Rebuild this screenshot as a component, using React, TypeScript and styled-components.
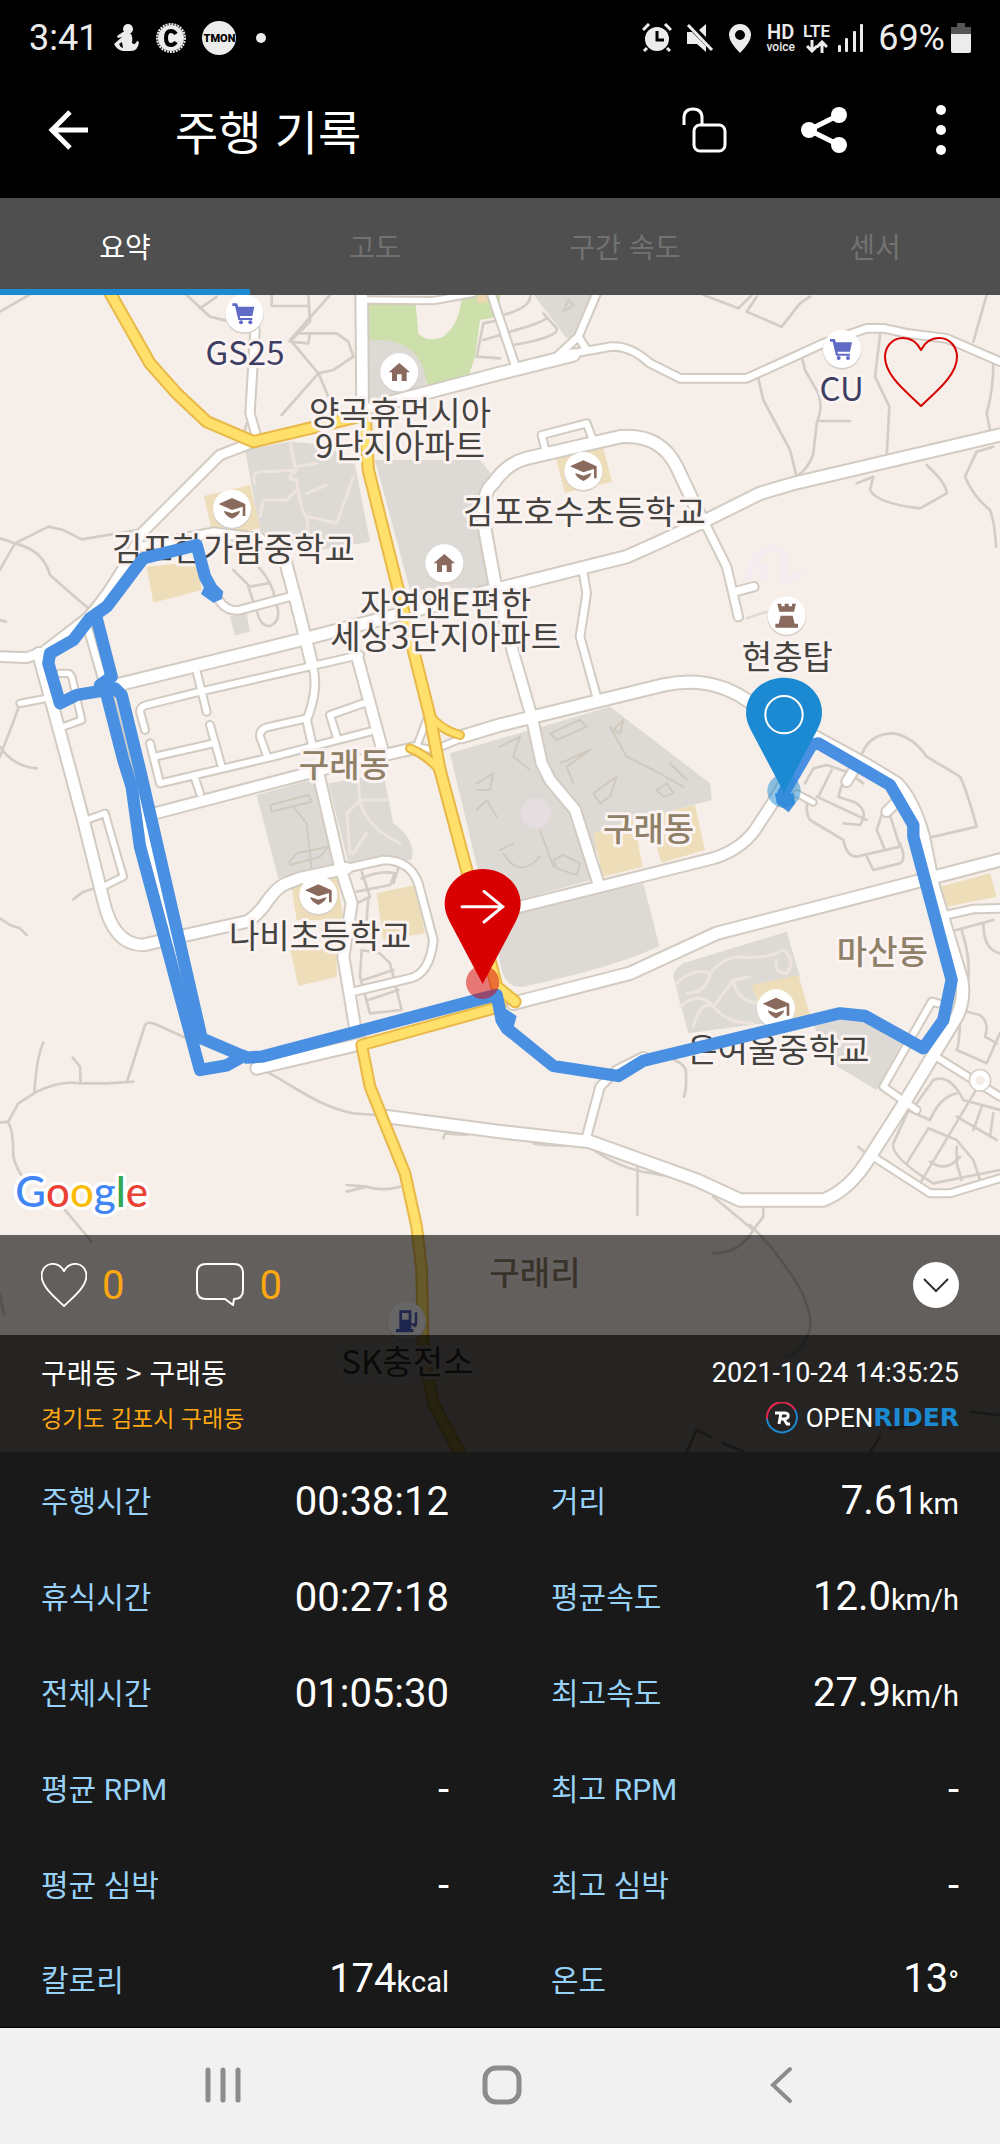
import React from "react";
import styled, { createGlobalStyle } from "styled-components";

const sans = `Roboto, "Noto Sans CJK KR", sans-serif`;
const korean = `"Noto Sans CJK KR", "Noto Sans", sans-serif`;

const GlobalStyle = createGlobalStyle`
  *, *::before, *::after { box-sizing: border-box; }
  body { margin: 0; background: #191919; }
  button { border: 0; padding: 0; background: none; color: inherit; font: inherit; cursor: pointer; }
  svg { display: block; flex: none; }
`;

const Page = styled.div`
  min-height: 100vh;
  display: flex;
  flex-direction: column;
  background: #191919;
  color: #fff;
  font-family: ${sans};
`;

/* ---------- status bar ---------- */

const StatusBar = styled.div`
  height: 76px;
  padding: 0 29px;
  display: flex;
  align-items: center;
  justify-content: space-between;
  background: #000;
  color: #ececec;
`;

const StatusGroup = styled.div<{ $gap: number }>`
  display: flex;
  align-items: center;
  gap: ${(p) => p.$gap}px;
`;

const StatusText = styled.span`
  font-size: 36px;
  line-height: 40px;
`;

const Stacked = styled.span`
  display: flex;
  flex-direction: column;
  align-items: center;
`;

const StackedTop = styled.strong<{ $size: number }>`
  font-size: ${(p) => p.$size}px;
  line-height: 17px;
  font-weight: 600;
`;

const StackedBottom = styled.span`
  font-size: 12px;
  line-height: 12px;
  font-weight: 500;
`;

/* ---------- app bar ---------- */

const AppBar = styled.header`
  height: 122px;
  padding: 0 38px 14px 48px;
  display: flex;
  align-items: center;
  background: #000;
`;

const Title = styled.h1`
  flex: 1;
  margin: 0 0 0 86px;
  font-family: ${korean};
  font-size: 47px;
  line-height: 56px;
  font-weight: 400;
`;

const Actions = styled.div`
  display: flex;
  align-items: center;
  gap: 73px;
`;

const IconButton = styled.button`
  display: flex;
  align-items: center;
  justify-content: center;
`;

/* ---------- tabs ---------- */

const Tabs = styled.nav`
  display: grid;
  grid-template-columns: repeat(4, 1fr);
  background: #4f4f4f;
`;

const Tab = styled.button<{ $active: boolean }>`
  height: 97px;
  padding-top: 5px;
  font-family: ${korean};
  font-size: 28px;
  line-height: 36px;
  font-weight: 400;
  color: ${(p) => (p.$active ? "#fff" : "#727272")};
  border-bottom: 6px solid ${(p) => (p.$active ? "#1b8ad2" : "#4f4f4f")};
`;

/* ---------- map ---------- */

const MapArea = styled.section`
  position: relative;
  display: grid;
  background: #f6eee8;
`;

const MapDrawing = styled.svg`
  grid-area: 1 / 1;
  width: 100%;
  height: auto;
`;

const Favorite = styled.button`
  position: absolute;
  top: 42px;
  right: 42px;
`;

const Overlay = styled.div`
  grid-area: 1 / 1;
  align-self: end;
  position: relative;
`;

const Reactions = styled.div`
  height: 100px;
  padding: 0 41px;
  display: flex;
  align-items: center;
  justify-content: space-between;
  background: rgba(0, 0, 0, 0.6);
`;

const ReactionList = styled.div`
  display: flex;
  gap: 72px;
`;

const Reaction = styled.button`
  display: flex;
  align-items: center;
  gap: 15px;
`;

const Count = styled.span`
  padding-top: 2px;
  font-size: 40px;
  line-height: 44px;
  color: #ffa812;
`;

const Summary = styled.div`
  height: 117px;
  padding: 18px 41px 16px;
  display: flex;
  justify-content: space-between;
  background: rgba(0, 0, 0, 0.85);
`;

const SummaryColumn = styled.div<{ $end?: boolean }>`
  display: flex;
  flex-direction: column;
  justify-content: space-between;
  align-items: ${(p) => (p.$end ? "flex-end" : "flex-start")};
`;

const RouteName = styled.h2`
  margin: 0;
  font-family: ${korean};
  font-size: 28px;
  line-height: 38px;
  font-weight: 400;
`;

const Region = styled.span`
  font-family: ${korean};
  font-size: 23px;
  line-height: 38px;
  color: #ffa812;
`;

const Timestamp = styled.time`
  font-size: 27px;
  line-height: 40px;
`;

const Brand = styled.span`
  display: flex;
  align-items: center;
  font-size: 26px;
  line-height: 36px;
`;

const BrandOpen = styled.span`
  margin-left: 7px;
`;

const BrandRider = styled.strong`
  font-family: "DejaVu Sans", sans-serif;
  font-size: 25px;
  font-weight: 700;
  color: #1b8ad2;
`;

/* ---------- statistics ---------- */

const Stats = styled.dl`
  margin: 0;
  padding: 2px 41px 0;
  display: grid;
  grid-template-columns: 1fr 1fr;
  grid-template-rows: repeat(5, 96px) 93px;
  column-gap: 102px;
  background: #191919;
`;

const Stat = styled.div`
  display: flex;
  align-items: center;
  justify-content: space-between;
`;

const StatLabel = styled.dt`
  font-family: ${sans};
  font-size: 30px;
  line-height: 40px;
  color: #98d2f8;
`;

const StatValue = styled.dd`
  margin: 0;
  font-size: 40px;
  line-height: 48px;
`;

const Unit = styled.span`
  font-size: 29px;
`;

/* ---------- system navigation ---------- */

const SystemNav = styled.nav`
  height: 117px;
  padding: 0 0 2px 4px;
  display: grid;
  grid-template-columns: repeat(3, 28%);
  justify-content: center;
  background: #f1f1f1;
  border-top: 1px solid #000;
`;

/* ---------- map data, three units per pixel ---------- */

type Road = { d: string; w: number };

const paths = [
  // north west
  "M0,65 L130,-10", "M560,15 L630,80 L690,95", "M600,55 L650,20", "M990,15 L870,150", "M815,15 L815,48 L925,48",
  "M925,15 L930,95 L870,155 L925,160 L930,130", "M890,130 L1010,130 L1045,155 L1060,200 L1000,240 L955,250 L875,155",
  "M955,250 L845,375", "M955,250 L985,320", "M1430,200 L1450,100 L1500,90", "M1430,200 L1500,205", "M1450,150 L1520,130",
  "M1510,75 Q1600,50 1590,10", "M1530,125 Q1620,100 1640,85", "M1540,165 Q1680,140 1670,115 L1630,70", "M1690,65 L1705,30 L1720,45 L1700,60",
  "M0,745 L45,760 L145,710 L190,720 L245,748 L425,718", "M45,760 Q10,820 0,840", "M45,760 Q130,780 150,855 Q200,900 265,955", "M0,990 L18,995",
  "M60,1240 C40,1300 10,1370 0,1400", "M0,1370 Q40,1430 110,1435", "M700,840 L750,890 L805,880", "M775,830 Q820,880 825,930 Q850,990 810,1008 Q780,1010 770,960", "M745,890 L765,950",
  "M730,440 L740,400",
  // north east
  "M2110,15 L2215,55 L2255,15", "M2270,20 L2240,65 L2345,110 L2400,40 L2430,20", "M2960,15 L2920,155", "M2640,135 L2625,260 L2668,350 L2660,500",
  "M2405,200 L2415,240 L2455,310 Q2470,350 2450,400 L2440,490 Q2430,530 2390,560 L2370,480 L2290,330 L2275,265", "M2460,393 L2550,393", "M2980,220 Q2980,300 2960,370 L2970,420",
  "M2570,580 L2620,560 L2610,600 Q2630,640 2760,655 L2840,610 Q2840,580 2780,525", "M2980,470 L2930,485 L2895,560 Q2920,620 2970,660 Q2985,700 2988,770",
  "M2580,1410 Q2600,1330 2680,1330 Q2740,1340 2780,1400 L2880,1460 Q2900,1500 2930,1610 L2780,1645",
  // west and south west
  "M0,1885 L30,1905 L60,1915 L80,1935", "M220,1828 L250,1805 L285,1795", "M0,2498 L25,2495 L55,2440 L105,2408 Q180,2370 240,2380 L320,2380 L400,2375",
  "M103,2408 Q110,2300 130,2258", "M242,2378 L240,2330 L218,2303", "M382,2372 L435,2205 Q440,2195 460,2200 L560,2245", "M25,2498 Q40,2520 40,2600 Q50,2640 75,2670",
  "M195,2760 L275,2855", "M0,3015 L12,3075", "M800,2345 C900,2400 960,2450 1060,2470 L1130,2475", "M1040,2685 L1100,2690 L1040,2705 M1100,2690 Q1150,2705 1200,2690", "M1330,2545 L1335,2530 L1400,2535",
  // centre
  "M1085,1745 L1110,1820 L1070,1840 M1085,1765 Q1140,1740 1185,1750 L1170,1785 L1070,1805 M1195,1735 L1180,1780", "M1105,1825 L1100,1890", "M1085,1980 L1080,2060 L1110,2170 L1205,2160 L1170,2020 L1140,1990 Z", "M1090,2070 L1180,2040", "M1105,2130 L1195,2100",
  "M2000,2300 Q2060,2320 2058,2350 Q2060,2400 2052,2420", "M1600,2560 Q1650,2570 1760,2565 Q1860,2640 1960,2650 L2040,2665", "M1913,2620 L1912,2775", "M2140,2720 L2260,2820 L2290,2780 L2290,2750", "M2260,2820 Q2220,2890 2140,2890",
  "M2250,2805 Q2330,2880 2400,2995 Q2450,3100 2420,3140 Q2400,3190 2360,3200",
  // east blocks
  "M2415,1480 L2440,1435 L2480,1425 L2540,1445 L2590,1480", "M2495,1440 L2455,1520", "M2535,1455 L2515,1520 L2560,1535 Q2610,1560 2580,1605 L2530,1600", "M2430,1520 Q2410,1560 2430,1590 L2530,1650 Q2540,1700 2570,1700 L2700,1670 L2665,1560", "M2650,1560 L2630,1620 L2655,1680", "M2600,1700 L2620,1740 L2700,1720 Q2720,1710 2700,1660", "M2450,1520 L2600,1590",
  "M2850,1925 L2980,1890", "M2885,1920 Q2930,2060 2880,2150 M2880,2160 L2940,2175 Q2970,2200 2955,2240 L2990,2260 M2880,2160 Q2880,2260 2870,2280 L2960,2320 Q2990,2250 3000,2230", "M2950,1900 Q2950,1980 3000,1990",
  "M2700,2450 L2790,2490 Q2820,2420 2870,2410", "M2750,2440 L2800,2370 Q2850,2350 2890,2430 L3000,2460", "M2735,2440 L2680,2560 Q2670,2600 2800,2680 L3000,2640", "M2940,2380 L2760,2680", "M2785,2515 L2870,2550 L2920,2610 L2940,2670", "M2785,2515 L2720,2620", "M2870,2480 L2990,2550", "M2945,2450 L2920,2520", "M2980,2470 L2970,2540", "M2870,2570 L2870,2620 L2885,2670", "M2880,2600 Q2840,2650 2790,2615", "M2575,2570 L2610,2600",
];

const roads: Road[] = [
  { w: 32, d: "M115,1090 L210,1440 L250,1590 L310,1830 Q340,1965 430,1965 L560,1935 L740,1895 Q760,1885 790,1850 Q830,1790 860,1780 L900,1765 L1040,1735" },
  { w: 20, d: "M1040,1735 L1150,1710 Q1230,1710 1255,1780 L1300,1950 Q1290,2050 1230,2065 L1060,2105" },
  { w: 34, d: "M330,1190 L900,1050 L1500,895 L1880,800 L1970,760 L2120,690 L2280,610 L2390,578 L3000,435" },
  { w: 26, d: "M0,1100 L80,1103 L130,1085 L260,985 Q340,900 425,730 L660,495 L765,455" },
  { w: 26, d: "M430,770 L640,728 L780,745 L860,820" },
  { w: 32, d: "M855,810 L890,940 L935,1120" },
  { w: 20, d: "M935,1120 Q960,1190 920,1290 L940,1380" },
  { w: 32, d: "M1085,0 L1088,370" },
  { w: 22, d: "M765,120 L750,370 L770,440" },
  { w: 34, d: "M1120,350 L1500,250 L1720,195" },
  { w: 20, d: "M1720,190 L1830,170 Q1890,165 1950,220 L2040,265 L2240,265 L2350,215 L2470,160 L2600,115 L2650,115 L2720,130 L2840,145 L3000,215" },
  { w: 20, d: "M1790,10 L1735,140 L1670,200 M1735,140 L1760,180" },
  { w: 20, d: "M1470,0 L1545,225" },
  { w: 16, d: "M1105,30 L1300,32 L1420,10" },
  { w: 34, d: "M1490,910 L1455,720 Q1440,610 1480,580 Q1520,520 1580,505 L1860,440 Q1980,430 2030,530 L2110,700" },
  { w: 30, d: "M1490,890 L1540,1090 L1595,1280 L1625,1420 L1650,1470 L1725,1560 L1795,1780" },
  { w: 18, d: "M1635,475 L1625,435 L1760,400 L1775,440" },
  { w: 22, d: "M2115,700 L2180,830 L2215,980 M2205,905 L2262,890" },
  { w: 20, d: "M1750,850 L1760,910 L1740,1040 L1790,1220" },
  { w: 34, d: "M1385,1340 L1500,1305 L1990,1185 Q2130,1155 2240,1230 L2600,1425 L2690,1480 Q2740,1530 2770,1640 L2800,1790 L2885,2070 Q2895,2130 2870,2180 L2700,2460 L2610,2600 Q2550,2700 2470,2730 L2220,2730 L2090,2670 L1770,2555 L1500,2525 L1160,2480" },
  { w: 30, d: "M465,1570 L960,1440 L1240,1375" },
  { w: 16, d: "M1280,1290 L1250,1370 L1300,1380 L1385,1345" },
  { w: 30, d: "M1070,1095 L1150,1390" },
  { w: 30, d: "M955,1450 L1020,1730 L1055,1840 L1030,2000 L1065,2210" },
  { w: 18, d: "M435,1320 L420,1265 Q420,1250 440,1245 L600,1205 L1080,1095 M590,1145 L620,1265 M630,1305 L665,1430 M450,1360 L480,1480 L820,1400 L1110,1325 M465,1400 L640,1360 M800,1395 L780,1340 Q778,1320 800,1312 L920,1285 M1010,1340 L990,1275 L1090,1240 M585,1465 L600,1510" },
  { w: 20, d: "M640,900 Q670,970 720,960 L870,920" },
  { w: 16, d: "M60,1240 L140,1225 M180,1150 L205,1150 Q215,1150 220,1180 L245,1290 L190,1310 M260,1590 L315,1570 L370,1760 L310,1790" },
  { w: 20, d: "M265,1020 L305,1160 M320,1190 L600,2230" },
  { w: 30, d: "M1500,1865 L1780,1795 L2140,1705 Q2220,1680 2265,1620 L2330,1520 L2370,1450" },
  { w: 34, d: "M1540,2140 L1890,2050 L2150,1930 L2500,1840 L3000,1710" },
  { w: 22, d: "M1760,2540 L1800,2390 L1850,2340 L1930,2300" },
  { w: 20, d: "M2840,1875 L2920,1857 L3000,1855" },
  { w: 18, d: "M2815,2140 L2795,2135 L2650,2390 L2750,2460 M2800,2295 L3000,2420 M2620,2600 L2790,2710 L2850,2710 L3000,2665" },
  { w: 26, d: "M2540,1475 L2562,1440 M2660,1565 L2690,1535" },
  { w: 14, d: "M2390,1510 L2440,1537" },
  { w: 32, d: "M770,2335 L1090,2260" },
];

const highways: Road[] = [
  { w: 36, d: "M325,0 L450,220 L530,310 L620,395 L760,455 L930,415 L1095,375 L1105,540 L1190,880 L1290,1280 L1320,1440 L1400,1740 L1490,2090 L1545,2135" },
  { w: 26, d: "M1285,1270 Q1320,1320 1380,1335 M1230,1375 Q1290,1400 1325,1450" },
  { w: 34, d: "M1500,2150 L1085,2265 L1110,2390 L1150,2490 L1215,2650 L1250,2810 L1265,2940 L1270,3190 L1300,3340 L1380,3490" },
];

const blocks = [
  "M735,480 L870,455 L930,460 L1060,500 L1110,755 L960,780 L780,725 Z",
  "M1125,510 L1440,510 L1480,560 L1440,620 L1450,730 L1485,890 L1230,900 Z",
  "M1105,150 Q1280,140 1280,305 L1105,345 Z",
  "M1590,0 L1800,0 L1720,140 L1700,145 Z",
  "M690,980 L740,970 L750,1025 L705,1037 Z",
  "M1350,1390 L1830,1250 L2130,1480 L2135,1530 L1800,1620 L1775,1770 L1500,1845 L1460,1850 Z",
  "M1470,1880 L1930,1780 L1978,1968 Q1850,2030 1570,2090 Q1520,2095 1505,2040 Z",
  "M770,1515 L950,1465 L1015,1725 L835,1765 Z",
  "M985,1480 L1150,1450 L1180,1600 Q1250,1650 1235,1710 L1045,1720 Z",
  "M2020,2060 Q2020,2040 2050,2020 L2360,1925 L2400,2060 L2260,2090 L2290,2200 L2065,2230 Z",
  "M2440,2200 L2580,2180 L2710,2250 L2630,2400 L2480,2310 Z",
];

const yards = [
  "M612,618 L750,585 L780,715 L640,745 Z",
  "M440,830 L590,815 L605,900 L460,938 Z",
  "M1668,505 L1810,475 L1836,575 L1695,608 Z",
  "M875,1790 L1010,1750 L1030,1890 L890,1890 Z",
  "M870,1975 L1010,1965 L1010,2060 L895,2088 Z",
  "M1130,1810 L1245,1785 L1275,1930 L1150,1950 Z",
  "M1780,1630 L1900,1590 L1928,1730 L1808,1760 Z",
  "M1940,1580 L2085,1545 L2115,1680 L1985,1718 Z",
  "M2255,2085 L2395,2055 L2430,2175 L2300,2210 Z",
  "M2820,1790 L2970,1750 L2990,1820 L2840,1850 Z",
];

const footways = [
  "M765,580 Q750,540 800,545 L890,540 Q850,570 890,570 Q900,660 920,680 L925,740", "M780,680 L790,630 L860,630 L890,600", "M920,610 L980,585", "M925,680 L1010,700 L1060,560", "M870,455 L885,530 L950,520",
  "M1075,1470 L1080,1530 L1040,1570 L1050,1690", "M1080,1530 L1160,1530", "M1080,1540 Q1110,1620 1200,1660", "M1100,1630 L1060,1690",
  "M2030,2080 Q2080,2030 2130,2050 Q2120,2110 2060,2110 M2130,2050 Q2160,2010 2210,2000 Q2300,2010 2350,1980 Q2390,2010 2360,2050 Q2320,2050 2330,2010", "M2040,2150 Q2100,2100 2140,2150 L2200,2070 L2250,2060 M2080,2210 Q2100,2130 2140,2150 Q2180,2200 2260,2200 M2200,2070 Q2210,2130 2270,2140",
];

const courts = [
  "M810,1545 L925,1515 L935,1535 L815,1565 Z M880,1550 L920,1600 L935,1740 M865,1720 L890,1690 L985,1670 L960,1700 L870,1725",
  "M1500,1370 L1560,1340 L1540,1400 L1590,1440 M1650,1330 L1740,1290 L1760,1310 L1670,1350 Z M1840,1320 L1870,1290 L1860,1330 Z M1680,1420 L1770,1380 L1700,1430 L1720,1480",
  "M1780,1510 L1850,1460 L1830,1520 L1800,1540 Z M1970,1500 L2000,1480 L2020,1510 L1990,1520 Z M2010,1420 L2060,1470 L2030,1440 Z M1830,1310 L1880,1400 L1960,1440 L2050,1490",
  "M1430,1480 L1480,1450 L1470,1500 L1430,1500 M1430,1560 L1460,1530 L1490,1580 M1660,1710 L1690,1695 L1740,1720 L1730,1755 L1670,1735 Z M1510,1690 Q1560,1770 1620,1700 M1500,1680 L1540,1660 M1620,1620 L1660,1730",
];

const route = [
  "M640,905 L615,860 L590,765 L580,768 L430,805 L320,950 L270,985 L220,1050 L150,1090 L145,1120 L180,1240 L230,1215 L290,1205 L345,1195 L365,1215 L420,1440 L605,2245 L740,2303 L785,2300 L1450,2125 L1490,2115 L1505,2190 L1520,2215 L1660,2328 L1855,2358 L1930,2312 L2520,2170 L2595,2178 L2770,2275 L2830,2190 L2855,2070 L2740,1640 L2740,1605 L2670,1485 L2455,1360 L2435,1365 L2350,1510 L2360,1535",
  "M290,985 L335,1160 L300,1185 L320,1215 L370,1410 L395,1490 L420,1670 L600,2340 L680,2326 L730,2298",
];

type Place = { x: number; y: number; lines: string[]; kind?: "shop" | "district" };

const places: Place[] = [
  { x: 735, y: 225, lines: ["GS25"], kind: "shop" },
  { x: 1200, y: 406, lines: ["양곡휴먼시아", "9단지아파트"] },
  { x: 700, y: 814, lines: ["김포한가람중학교"] },
  { x: 1337, y: 978, lines: ["자연앤E편한", "세상3단지아파트"] },
  { x: 1753, y: 701, lines: ["김포호수초등학교"] },
  { x: 2525, y: 333, lines: ["CU"], kind: "shop" },
  { x: 2362, y: 1136, lines: ["현충탑"] },
  { x: 1033, y: 1460, lines: ["구래동"], kind: "district" },
  { x: 960, y: 1973, lines: ["나비초등학교"] },
  { x: 1946, y: 1654, lines: ["구래동"], kind: "district" },
  { x: 2647, y: 2023, lines: ["마산동"], kind: "district" },
  { x: 2335, y: 2316, lines: ["은여울중학교"] },
  { x: 1605, y: 2985, lines: ["구래리"], kind: "district" },
  { x: 1222, y: 3252, lines: ["SK충전소"] },
];

const PlaceLabel = styled.text<{ $kind?: string }>`
  font-family: ${korean};
  font-size: 99px;
  font-weight: ${(p) => (p.$kind === "district" ? 500 : 400)};
  text-anchor: middle;
  fill: ${(p) => (p.$kind === "district" ? "#8f8068" : p.$kind === "shop" ? "#3c3f63" : "#454340")};
  stroke: #fbf3f1;
  stroke-width: 18px;
  stroke-linejoin: round;
  paint-order: stroke;
`;

const GoogleMark = styled.text`
  font-family: Lato, sans-serif;
  font-size: 126px;
  font-weight: 500;
  stroke: #fff;
  stroke-width: 20px;
  stroke-linejoin: round;
  paint-order: stroke;
`;

const glyphs: Record<string, React.ReactNode> = {
  cart: (
    <g fill="#5f6bc4">
      <path d="M-36,-30 H-22 L-18,-20 H30 L24,8 H-14 L-12,14 H24 V20 H-18 L-28,-22 H-36 Z" />
      <circle cx="-10" cy="27" r="6" />
      <circle cx="18" cy="27" r="6" />
    </g>
  ),
  home: <path fill="#8b6a5e" d="M0,-28 L32,0 H22 V26 H7 V6 H-7 V26 H-22 V0 H-32 Z" />,
  school: (
    <g fill="#8b6a5e">
      <path d="M-40,-14 L0,-32 L40,-14 V22 H32 V-6 L0,4 Z" />
      <path d="M-24,6 L0,14 L24,6 Q24,18 0,30 Q-24,18 -24,6 Z" />
    </g>
  ),
  tower: <path fill="#8b6a5e" d="M-28,-36 H-16 V-28 H-6 V-36 H6 V-28 H16 V-36 H28 L22,-12 H-22 Z M-18,0 H18 L24,24 H34 V36 H-34 V24 H-24 Z" />,
  fuel: (
    <g fill="#4f5fc0">
      <path fillRule="evenodd" d="M-22,-32 H14 V24 H20 V34 H-32 V24 H-22 Z M-14,-24 V-4 H6 V-24 Z" />
      <path d="M14,10 H22 Q24,22 28,8 V-26" fill="none" stroke="#4f5fc0" strokeWidth="7" />
    </g>
  ),
};

const markers: [number, number, string][] = [
  [733, 70, "cart"],
  [1198, 247, "home"],
  [696, 656, "school"],
  [1333, 820, "home"],
  [1750, 543, "school"],
  [2526, 177, "cart"],
  [2360, 977, "tower"],
  [955, 1815, "school"],
  [2328, 2155, "school"],
  [1220, 3093, "fuel"],
];

const PIN = "M0,0 L-98,-185 C-108,-205 -114,-222 -114,-240 C-114,-300 -62,-345 0,-345 C62,-345 114,-300 114,-240 C114,-222 108,-205 98,-185 Z";

const RideMap = () => (
  <MapDrawing viewBox="0 15 3000 3471" role="img" aria-label="주행 경로 지도">
    <rect y="15" width="3000" height="3471" fill="#f6eee8" />
    <path d="M1100,35 L1500,15 L1500,80 L1440,90 L1425,200 L1400,275 L1285,300 Q1270,180 1105,150 Z" fill="#cddfaa" />
    <path d="M1245,20 H1385 Q1380,100 1330,140 Q1280,160 1255,130 Z" fill="#f6eee8" />
    <path d="M1430,15 H1470 L1475,35 L1430,40 Z" fill="#ecd9b4" />
    {blocks.map((d) => <path key={d} d={d} fill="#dddad5" />)}
    {yards.map((d) => <path key={d} d={d} fill="#eeddb9" />)}
    <circle cx="1607" cy="1570" r="45" fill="#e6dde0" />
    <g fill="none" strokeLinecap="round" strokeLinejoin="round">
      {footways.map((d) => <path key={d} d={d} stroke="#eee4df" strokeWidth="9" />)}
      {courts.map((d) => <path key={d} d={d} stroke="#d0c9be" strokeWidth="6" />)}
      <path d="M2245,860 Q2270,780 2320,770 L2350,790 L2350,870 L2410,850 M2290,860 V830" stroke="#f4edf0" strokeWidth="24" />
      <path d="M2240,985 L2300,965" stroke="#e0dad5" strokeWidth="8" />
      {paths.map((d) => <path key={d} d={d} stroke="#d2cdc5" strokeWidth="8" />)}
      {roads.map((r) => <path key={r.d} d={r.d} stroke="#d2cbc1" strokeWidth={r.w + 12} />)}
      {roads.map((r) => <path key={r.d} d={r.d} stroke="#fff" strokeWidth={r.w} />)}
      <circle cx="2940" cy="2371" r="22" stroke="#d2cbc1" strokeWidth="24" />
      <circle cx="2940" cy="2371" r="22" fill="#f6eee8" stroke="#fff" strokeWidth="16" />
      {highways.map((r) => <path key={r.d} d={r.d} stroke="#e8b848" strokeWidth={r.w + 4} />)}
      {highways.map((r) => <path key={r.d} d={r.d} stroke="#ffe06a" strokeWidth={r.w - 8} />)}
      <g stroke="#a9a49d" strokeWidth="8">
        <path d="M2060,3485 L2090,3420 L2135,3442 M2170,3460 L2230,3485" />
        <path d="M2610,3485 L2640,3440 M2670,3417 L2760,3402 M2910,3365 L3000,3376" />
      </g>
    </g>
    {markers.map(([x, y, name]) => (
      <g key={`${x}-${y}`} transform={`translate(${x} ${y})`}>
        <circle cy="4" r="58" fill="#d8cfc9" />
        <circle r="57" fill="#fff" />
        {glyphs[name]}
      </g>
    ))}
    {places.map((p) => (
      <PlaceLabel key={`${p.x}-${p.y}`} y={p.y} $kind={p.kind}>
        {p.lines.map((line, i) => (
          <tspan key={line} x={p.x} dy={i * 99}>{line}</tspan>
        ))}
      </PlaceLabel>
    ))}
    <g fill="none" stroke="#4a90e2" strokeWidth="37" strokeLinejoin="round" strokeLinecap="round">
      {route.map((d) => <path key={d} d={d} />)}
    </g>
    <path d="M603,912 L615,885 L650,885 L670,905 L665,928 L640,938 Z" fill="#4a90e2" />
    <path d="M1515,2155 L1550,2178 L1540,2215 L1510,2215 Z M2325,1510 H2380 L2386,1540 L2366,1567 L2330,1540 Z" fill="#4a90e2" />
    <g transform="translate(1448 2082)">
      <circle cy="-5" r="50" fill="#d80000" fillOpacity="0.5" />
      <path d={PIN} fill="#d80000" />
      <path d="M-62,-232 H60 M4,-278 L60,-232 L4,-186" fill="none" stroke="#fff" strokeWidth="9" strokeLinecap="round" />
    </g>
    <g transform="translate(2352 1508)">
      <circle cy="-5" r="50" fill="#1b8ad2" fillOpacity="0.5" />
      <path d={PIN} fill="#1b8ad2" />
      <circle cy="-234" r="56" fill="none" stroke="#fff" strokeWidth="6" />
    </g>
    <GoogleMark x="46" y="2750">
      <tspan fill="#4285f4">G</tspan>
      <tspan fill="#ea4335">o</tspan>
      <tspan fill="#fbbc05">o</tspan>
      <tspan fill="#4285f4">g</tspan>
      <tspan fill="#34a853">l</tspan>
      <tspan fill="#ea4335">e</tspan>
    </GoogleMark>
  </MapDrawing>
);

/* ---------- icons ---------- */

const HeartIcon = ({ width, height, color, stroke }: { width: number; height: number; color: string; stroke: number }) => (
  <svg width={width} height={height} viewBox="0 0 74 70" fill="none" stroke={color} strokeWidth={stroke} strokeLinejoin="round">
    <path d="M37,13 C33,5 26,1 19,1 C8,1 1,10 1,20 C1,39 24,56 37,69 C50,56 73,39 73,20 C73,10 66,1 55,1 C48,1 41,5 37,13 Z" />
  </svg>
);

const CommentIcon = () => (
  <svg width="48" height="44" viewBox="0 0 48 44" fill="none" stroke="#fff" strokeWidth="2" strokeLinejoin="round">
    <path d="M10,1 H38 Q47,1 47,10 V27 Q47,36 38,36 L37,42 L29,36 H10 Q1,36 1,27 V10 Q1,1 10,1 Z" />
  </svg>
);

const CollapseIcon = () => (
  <svg width="46" height="46" viewBox="0 0 46 46">
    <circle cx="23" cy="23" r="23" fill="#fff" />
    <path d="M11,17 L23,29 L35,17" fill="none" stroke="#333" strokeWidth="2" />
  </svg>
);

const PersonIcon = () => (
  <svg width="26" height="28" viewBox="0 0 26 28" fill="#ececec">
    <circle cx="14" cy="5" r="5" />
    <path fillRule="evenodd" d="M3,12 L9,8 Q14,7 17,10 Q19,13 18,19 Q21,22 23,17 L25,18 Q24,27 17,27 H9 Q3,26 0,20 L8,13 L4,14 Z M5,20 Q6,23 9,24 L8,18 Z" />
  </svg>
);

const CookieIcon = () => (
  <svg width="30" height="30" viewBox="0 0 30 30">
    <circle cx="15" cy="15" r="13" fill="#ececec" />
    <circle cx="15" cy="15" r="14" fill="none" stroke="#ececec" strokeWidth="2" strokeDasharray="2 1" />
    <path d="M20,11 Q18,8 15,8 Q10,8 10,15 Q10,22 15,22 Q18,22 20,19" fill="none" stroke="#000" strokeWidth="4" />
  </svg>
);

const TmonBadge = styled.span`
  width: 34px;
  height: 34px;
  display: flex;
  align-items: center;
  justify-content: center;
  border-radius: 50%;
  background: #ececec;
  color: #000;
  font-family: Roboto, sans-serif;
  font-size: 11px;
  font-weight: 900;
`;

const Dot = styled.span`
  width: 10px;
  height: 10px;
  margin-left: 4px;
  border-radius: 50%;
  background: #ececec;
`;

const AlarmIcon = () => (
  <svg width="30" height="30" viewBox="0 0 30 30">
    <circle cx="15" cy="16" r="12" fill="#ececec" />
    <path d="M1,7 L7,1 M29,7 L23,1 M5,25 L2,28 M25,25 L28,28" stroke="#ececec" strokeWidth="3" />
    <path d="M15,8 V17 H22" fill="none" stroke="#000" strokeWidth="3" />
  </svg>
);

const MuteIcon = () => (
  <svg width="28" height="30" viewBox="0 0 28 30" fill="#ececec">
    <path d="M13,7 L20,1 V14 Z M1,9 H6 L20,23 V29 L11,21 H1 Z" />
    <path d="M2,2 L26,27" stroke="#ececec" strokeWidth="3" />
  </svg>
);

const LocationIcon = () => (
  <svg width="24" height="30" viewBox="0 0 24 30">
    <path fillRule="evenodd" fill="#ececec" d="M12,1 A11,11 0 0 1 23,12 Q23,19 12,30 Q1,19 1,12 A11,11 0 0 1 12,1 Z M12,7 A5,5 0 1 0 12,17 A5,5 0 1 0 12,7 Z" />
  </svg>
);

const DataArrows = () => (
  <svg width="22" height="13" viewBox="0 0 22 13" fill="none" stroke="#ececec" strokeWidth="3">
    <path d="M6,0 V11 M1,6 L6,11 L11,6 M16,13 V2 M11,7 L16,2 L21,7" />
  </svg>
);

const SignalIcon = () => (
  <svg width="26" height="28" viewBox="0 0 26 28" fill="#ececec">
    <rect y="21" width="3" height="7" rx="1" />
    <rect x="7" y="14" width="3" height="14" rx="1" />
    <rect x="15" y="7" width="3" height="21" rx="1" />
    <rect x="22" width="3" height="28" rx="1" />
  </svg>
);

const BatteryIcon = () => (
  <svg width="20" height="30" viewBox="0 0 20 30">
    <path d="M6,0 H14 V4 H20 V11 H0 V4 H6 Z" fill="#555" />
    <path d="M0,11 H20 V28 Q20,30 18,30 H2 Q0,30 0,28 Z" fill="#ececec" />
  </svg>
);

const BackIcon = () => (
  <svg width="41" height="40" viewBox="0 0 41 40" fill="none" stroke="#fff" strokeWidth="5">
    <path d="M40,20 H4 M22,2 L4,20 L22,38" />
  </svg>
);

const UnlockIcon = () => (
  <svg width="46" height="46" viewBox="0 0 46 46" fill="none" stroke="#fff" strokeWidth="3">
    <rect x="12" y="18" width="31" height="26" rx="6" />
    <path d="M2,18 V11 Q2,2 11,2 Q20,2 20,11 V18" />
  </svg>
);

const ShareIcon = () => (
  <svg width="46" height="46" viewBox="0 0 46 46" fill="#fff">
    <path d="M38,8 L8,23 L38,38" fill="none" stroke="#fff" strokeWidth="5" />
    <circle cx="38" cy="8" r="8" />
    <circle cx="8" cy="23" r="8" />
    <circle cx="38" cy="38" r="8" />
  </svg>
);

const MoreIcon = () => (
  <svg width="42" height="52" viewBox="0 0 42 52" fill="#fff">
    <circle cx="21" cy="6" r="5" />
    <circle cx="21" cy="26" r="5" />
    <circle cx="21" cy="46" r="5" />
  </svg>
);

const BrandIcon = () => (
  <svg width="33" height="33" viewBox="0 0 33 33" fill="none">
    <path d="M1,17 A15,15 0 0 1 29,8" stroke="#e3274f" strokeWidth="2" />
    <path d="M29,8 A15,15 0 1 1 1,17" stroke="#1b8ad2" strokeWidth="2" />
    <path d="M9,11 H19 Q23,11 22,15 Q21,17 17,17 H14 M18,17 L21,22 H24 M15,11 L13,22" stroke="#fff" strokeWidth="3" />
  </svg>
);

const stats: [string, string, string?][] = [
  ["주행시간", "00:38:12"],
  ["거리", "7.61", "km"],
  ["휴식시간", "00:27:18"],
  ["평균속도", "12.0", "km/h"],
  ["전체시간", "01:05:30"],
  ["최고속도", "27.9", "km/h"],
  ["평균 RPM", "-"],
  ["최고 RPM", "-"],
  ["평균 심박", "-"],
  ["최고 심박", "-"],
  ["칼로리", "174", "kcal"],
  ["온도", "13", "°"],
];

const tabs = ["요약", "고도", "구간 속도", "센서"];

export default function App() {
  const [active, setActive] = React.useState(0);
  return (
    <Page lang="ko">
      <GlobalStyle />
      <StatusBar>
        <StatusGroup $gap={16}>
          <StatusText>3:41</StatusText>
          <PersonIcon />
          <CookieIcon />
          <TmonBadge>TMON</TmonBadge>
          <Dot />
        </StatusGroup>
        <StatusGroup $gap={14}>
          <AlarmIcon />
          <MuteIcon />
          <LocationIcon />
          <StatusGroup $gap={8}>
            <Stacked>
              <StackedTop $size={20}>HD</StackedTop>
              <StackedBottom>voice</StackedBottom>
            </Stacked>
            <Stacked>
              <StackedTop $size={17}>LTE</StackedTop>
              <DataArrows />
            </Stacked>
            <SignalIcon />
          </StatusGroup>
          <StatusGroup $gap={6}>
            <StatusText>69%</StatusText>
            <BatteryIcon />
          </StatusGroup>
        </StatusGroup>
      </StatusBar>

      <AppBar>
        <IconButton aria-label="뒤로"><BackIcon /></IconButton>
        <Title>주행 기록</Title>
        <Actions>
          <IconButton aria-label="잠금 해제"><UnlockIcon /></IconButton>
          <IconButton aria-label="공유"><ShareIcon /></IconButton>
          <IconButton aria-label="더보기"><MoreIcon /></IconButton>
        </Actions>
      </AppBar>

      <Tabs>
        {tabs.map((name, i) => (
          <Tab key={name} $active={i === active} onClick={() => setActive(i)}>{name}</Tab>
        ))}
      </Tabs>

      <MapArea>
        <RideMap />
        <Favorite aria-label="즐겨찾기">
          <HeartIcon width={74} height={70} color="#d80000" stroke={2} />
        </Favorite>
        <Overlay>
          <Reactions>
            <ReactionList>
              <Reaction aria-label="좋아요">
                <HeartIcon width={46} height={44} color="#fff" stroke={3} />
                <Count>0</Count>
              </Reaction>
              <Reaction aria-label="댓글">
                <CommentIcon />
                <Count>0</Count>
              </Reaction>
            </ReactionList>
            <IconButton aria-label="접기"><CollapseIcon /></IconButton>
          </Reactions>
          <Summary>
            <SummaryColumn>
              <RouteName>구래동 &gt; 구래동</RouteName>
              <Region>경기도 김포시 구래동</Region>
            </SummaryColumn>
            <SummaryColumn $end>
              <Timestamp dateTime="2021-10-24T14:35:25">2021-10-24 14:35:25</Timestamp>
              <Brand>
                <BrandIcon />
                <BrandOpen>OPEN</BrandOpen>
                <BrandRider>RIDER</BrandRider>
              </Brand>
            </SummaryColumn>
          </Summary>
        </Overlay>
      </MapArea>

      <Stats>
        {stats.map(([label, value, unit]) => (
          <Stat key={label}>
            <StatLabel>{label}</StatLabel>
            <StatValue>
              {value}
              {unit && <Unit>{unit}</Unit>}
            </StatValue>
          </Stat>
        ))}
      </Stats>

      <SystemNav>
        <IconButton aria-label="최근 앱">
          <svg width="36" height="38" viewBox="0 0 36 38" stroke="#8c8c8c" strokeWidth="5" strokeLinecap="round">
            <path d="M3,4 V34 M18,4 V34 M33,4 V34" />
          </svg>
        </IconButton>
        <IconButton aria-label="홈">
          <svg width="40" height="40" viewBox="0 0 40 40" fill="none" stroke="#8c8c8c" strokeWidth="5">
            <rect x="3" y="3" width="34" height="34" rx="11" />
          </svg>
        </IconButton>
        <IconButton aria-label="이전">
          <svg width="24" height="38" viewBox="0 0 24 38" fill="none" stroke="#8c8c8c" strokeWidth="4" strokeLinecap="round">
            <path d="M21,3 L4,19 L21,35" />
          </svg>
        </IconButton>
      </SystemNav>
    </Page>
  );
}
